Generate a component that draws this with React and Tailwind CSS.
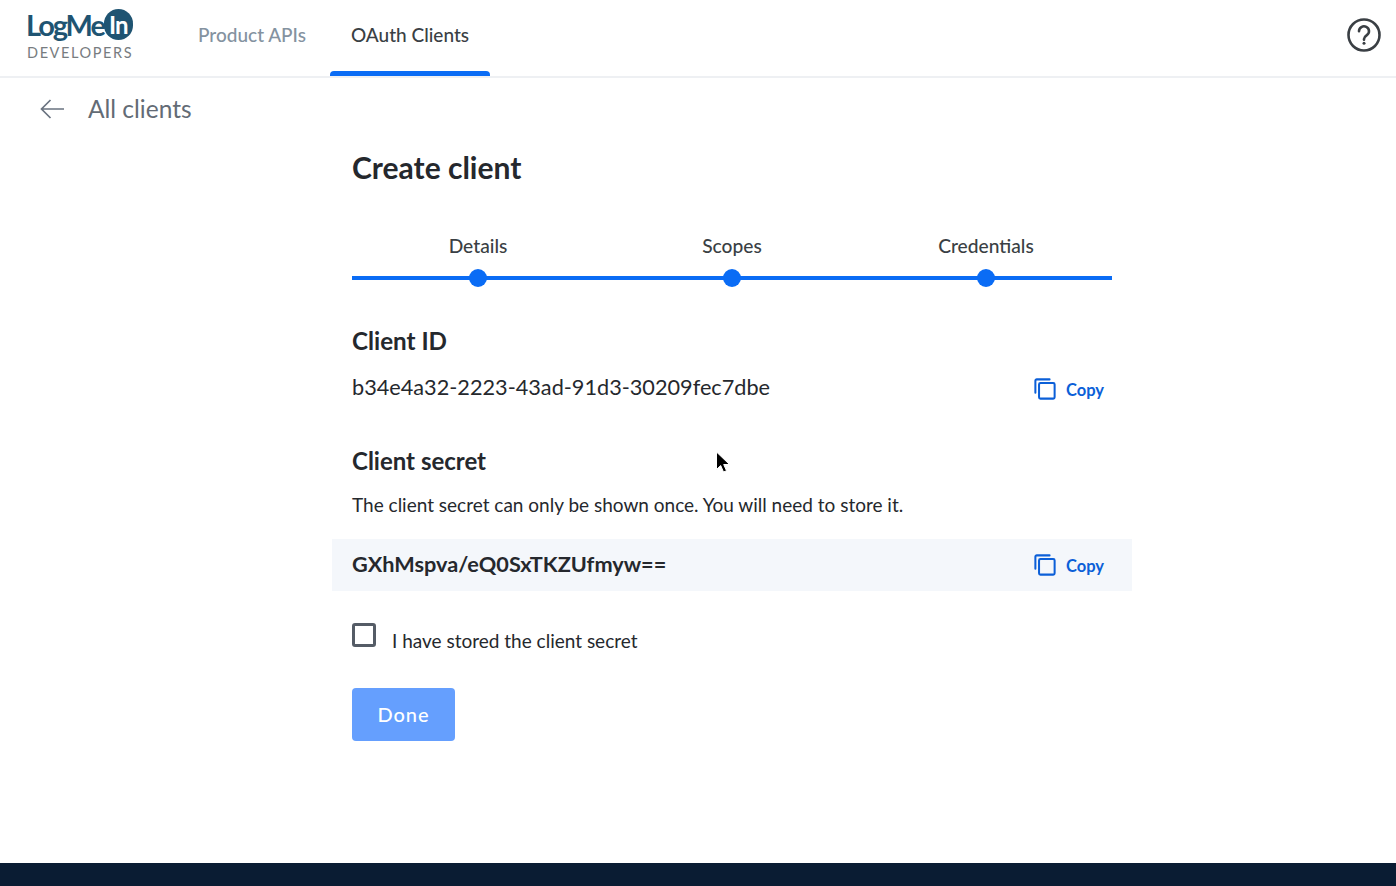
function CopyButton() {
  return (
    <button className="flex items-center gap-[10px] text-[#0b5fd8] font-bold text-[16.5px] pr-2">
      <svg width="22" height="22" viewBox="0 0 24 24" fill="none" stroke="currentColor" strokeWidth="2.2" className="shrink-0">
        <rect x="5.5" y="5.5" width="17" height="17" rx="1.5" />
        <path d="M1.5 16V3a1.5 1.5 0 0 1 1.5-1.5h14" strokeLinecap="round" />
      </svg>
      <span className="mt-[2px]">Copy</span>
    </button>
  );
}

function Step({ label }) {
  return (
    <div className="w-[254px] shrink-0 flex flex-col items-center">
      <div className="text-[19.2px] leading-[24px] text-[#3a3f44] font-medium">{label}</div>
      <div className="w-[18px] h-[18px] rounded-full bg-[#0a6cf5] mt-[11px]" />
    </div>
  );
}

export default function App() {
  return (
    <div className="min-h-[886px] flex flex-col bg-white font-['Lato',sans-serif] text-[#25282d]">
      <header className="h-[78px] shrink-0 border-b-2 border-[#eef0f3] flex items-stretch pl-[26px] pr-[14px]">
        <div className="w-[172px] pt-[8px]">
          <div className="flex items-center h-[33px]">
            <span className="text-[#1f5472] font-bold text-[29px] tracking-[-2.1px] leading-none">LogMe</span>
            <span className="w-[29px] h-[31px] rounded-full bg-[#1f5472] text-white font-bold text-[24px] tracking-[-1px] leading-none flex items-center justify-center">In</span>
          </div>
          <div className="text-[#777c80] text-[14.5px] leading-[17px] tracking-[1.6px] mt-[3px] pl-[1px]">DEVELOPERS</div>
        </div>
        <nav className="flex items-stretch text-[19px]">
          <div className="flex items-center text-[#8492a0] font-medium mr-[24px] pb-[6px]">Product APIs</div>
          <div className="relative flex items-center justify-center w-[160px] text-[#3a3f44] font-medium pb-[6px]">
            OAuth Clients
            <div className="absolute left-0 right-0 bottom-0 h-[5px] bg-[#0a6cf5] rounded-t-[4px]" />
          </div>
        </nav>
        <div className="ml-auto flex items-center pb-[6px]">
          <svg width="36" height="36" viewBox="0 0 36 36" fill="none" stroke="#3a3f44">
            <circle cx="18" cy="18" r="15.5" strokeWidth="2.6" />
            <path d="M13 14.2a5 4.8 0 1 1 7.8 3.9c-1.7 1.2-2.8 2-2.8 4v.6" strokeWidth="2.6" strokeLinecap="round" />
            <circle cx="18" cy="26.3" r="1.5" fill="#3a3f44" stroke="none" />
          </svg>
        </div>
      </header>

      <main className="flex-1 relative">
        <div className="flex items-center h-[62px] pl-[40px] pb-[1px] text-[#6a7380]">
          <svg width="24" height="20" viewBox="0 0 24 20" fill="none" stroke="currentColor" strokeWidth="1.7">
            <path d="M1.5 10H24M10.5 1l-9 9 9 9" />
          </svg>
          <span className="ml-[24px] mt-[2px] text-[24.5px] text-[#636b75]">All clients</span>
        </div>

        <div className="w-[800px] ml-[332px] px-5">
          <h1 className="text-[30px] leading-[38px] font-bold mt-[8px] text-[#25282d]">Create client</h1>

          <div className="relative mt-[48px]">
            <div className="absolute left-0 right-0 top-[42px] h-[4px] bg-[#0a6cf5]" />
            <div className="relative flex justify-center">
              <Step label="Details" />
              <Step label="Scopes" />
              <Step label="Credentials" />
            </div>
          </div>

          <h2 className="text-[24.2px] leading-[32px] font-bold mt-[38px]">Client ID</h2>
          <div className="flex items-center justify-between mt-[16px] h-[28px]">
            <span className="text-[21.7px]">b34e4a32-2223-43ad-91d3-30209fec7dbe</span>
            <div className="pt-[4px]">
              <CopyButton />
            </div>
          </div>

          <h2 className="text-[24px] leading-[32px] font-bold mt-[44px]">Client secret</h2>
          <p className="text-[19px] leading-[26px] mt-[15px]">The client secret can only be shown once. You will need to store it.</p>
        </div>

        <div className="w-[800px] ml-[332px] px-5 mt-[21px] h-[52px] bg-[#f4f7fb] flex items-center justify-between">
          <span className="text-[21.7px] font-bold pb-[2px]">GXhMspva/eQ0SxTKZUfmyw==</span>
          <CopyButton />
        </div>

        <div className="w-[800px] ml-[332px] px-5">
          <label className="flex items-start mt-[32px]">
            <span className="w-[24px] h-[24px] rounded-[3px] border-[3px] border-[#555c66] bg-white shrink-0" />
            <span className="ml-[16px] mt-[4px] text-[19px] leading-[28px]">I have stored the client secret</span>
          </label>
          <button className="mt-[33px] w-[103px] h-[53px] rounded-[4px] bg-[#659ffe] text-white text-[20px] font-medium tracking-[1px] pb-[1px]">Done</button>
        </div>

        <svg width="16" height="24" viewBox="0 0 16 24" className="absolute left-[715px] top-[373px]">
          <path d="M1.5 1v17.5l4.2-4 2.8 6.5 3-1.3-2.8-6.2h5.8z" fill="#000" stroke="#fff" strokeWidth="1" />
        </svg>
      </main>

      <footer className="h-[23px] shrink-0 bg-[#0a1c33]" />
    </div>
  );
}
